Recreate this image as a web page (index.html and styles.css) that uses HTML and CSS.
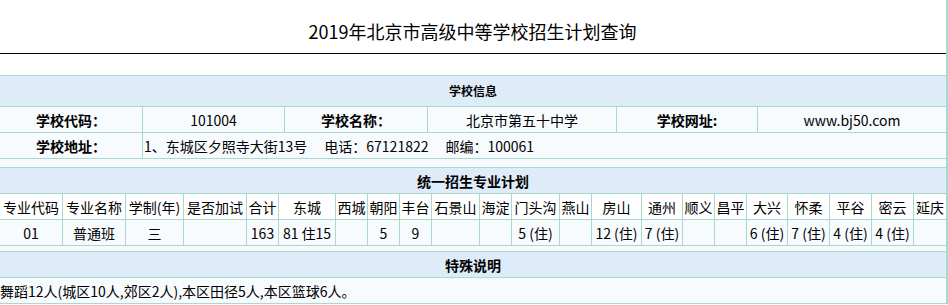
FILE: index.html
```html
<!DOCTYPE html>
<html lang="zh-CN">
<head>
<meta charset="utf-8">
<title>2019年北京市高级中等学校招生计划查询</title>
<link rel="stylesheet" href="styles.css">
</head>
<body>
<div class="page">
  <h1 class="title">2019年北京市高级中等学校招生计划查询</h1>
  <div class="plan">
    <div class="grid info">
      <div class="cell head span small">学校信息</div>
      <div class="cell label">学校代码：</div>
      <div class="cell">101004</div>
      <div class="cell label">学校名称：</div>
      <div class="cell">北京市第五十中学</div>
      <div class="cell label">学校网址:</div>
      <div class="cell">www.bj50.com</div>
      <div class="cell label">学校地址：</div>
      <div class="cell addr">1、东城区夕照寺大街13号<span class="sp"></span>电话：67121822<span class="sp"></span>邮编：100061</div>
    </div>

    <div class="grid major">
      <div class="cell head span">统一招生专业计划</div>
      <div class="cell th">专业代码</div>
      <div class="cell th">专业名称</div>
      <div class="cell th">学制(年)</div>
      <div class="cell th">是否加试</div>
      <div class="cell th">合计</div>
      <div class="cell th">东城</div>
      <div class="cell th">西城</div>
      <div class="cell th">朝阳</div>
      <div class="cell th">丰台</div>
      <div class="cell th">石景山</div>
      <div class="cell th">海淀</div>
      <div class="cell th">门头沟</div>
      <div class="cell th">燕山</div>
      <div class="cell th">房山</div>
      <div class="cell th">通州</div>
      <div class="cell th">顺义</div>
      <div class="cell th">昌平</div>
      <div class="cell th">大兴</div>
      <div class="cell th">怀柔</div>
      <div class="cell th">平谷</div>
      <div class="cell th">密云</div>
      <div class="cell th">延庆</div>
      <div class="cell">01</div>
      <div class="cell">普通班</div>
      <div class="cell">三</div>
      <div class="cell"></div>
      <div class="cell">163</div>
      <div class="cell">81 住15</div>
      <div class="cell"></div>
      <div class="cell">5</div>
      <div class="cell">9</div>
      <div class="cell"></div>
      <div class="cell"></div>
      <div class="cell">5 (住)</div>
      <div class="cell"></div>
      <div class="cell">12 (住)</div>
      <div class="cell">7 (住)</div>
      <div class="cell"></div>
      <div class="cell"></div>
      <div class="cell">6 (住)</div>
      <div class="cell">7 (住)</div>
      <div class="cell">4 (住)</div>
      <div class="cell">4 (住)</div>
      <div class="cell"></div>
    </div>

    <div class="grid note">
      <div class="cell head span">特殊说明</div>
      <div class="cell span text">舞蹈12人(城区10人,郊区2人),本区田径5人,本区篮球6人。</div>
    </div>
  </div>
</div>
</body>
</html>
```

FILE: styles.css
```css
html, body {
  margin: 0;
  padding: 0;
  background: #ffffff;
}

body {
  font-family: "Noto Sans CJK SC", "Noto Sans", sans-serif;
  color: #000000;
  font-size: 14px;
}

.page {
  margin-left: -1px;
  width: 947px;
  border-right: 2px solid #a9d8cf;
}

.title {
  margin: 0;
  height: 54px;
  box-sizing: border-box;
  padding-top: 19px;
  line-height: 24px;
  font-size: 18px;
  font-weight: normal;
  text-align: center;
  border-bottom: 1px solid #000000;
}

.plan {
  margin-top: 21px;
  background: #f7fbfe;
}

.grid {
  display: grid;
  border-top: 1px solid #a9d8cf;
}

.info {
  grid-template-columns: 143px 142px 143px 189px 141px 189px;
  grid-template-rows: 31px 26px 26px;
  margin-bottom: 8px;
}

.major {
  grid-template-columns: 63px 63px 58px 63px 32px 57px 32px 32px 32px 48px 32px 48px 32px 50px 41px 32px 32px 41px 42px 42px 42px 33px;
  grid-auto-rows: 26px;
  margin-bottom: 5px;
}

.note {
  grid-template-columns: 947px;
  grid-auto-rows: 26px;
}

.cell {
  box-sizing: border-box;
  border-left: 1px solid #a9d8cf;
  border-bottom: 1px solid #a9d8cf;
  background: #f7fbfe;
  display: flex;
  align-items: center;
  justify-content: center;
  white-space: nowrap;
  line-height: 20px;
  overflow: hidden;
}

.cell.head {
  background: #deebf9;
  font-weight: bold;
  font-size: 14px;
}

.cell.head.small {
  font-size: 12px;
}

.span {
  grid-column: 1 / -1;
}

.cell.label {
  font-weight: bold;
}

.cell.addr {
  grid-column: 2 / -1;
  justify-content: flex-start;
  padding-left: 1px;
}

.sp {
  display: inline-block;
  width: 17px;
}

.cell.th {
  background: #ffffff;
}

.cell.text {
  justify-content: flex-start;
  padding-left: 0;
}
```
